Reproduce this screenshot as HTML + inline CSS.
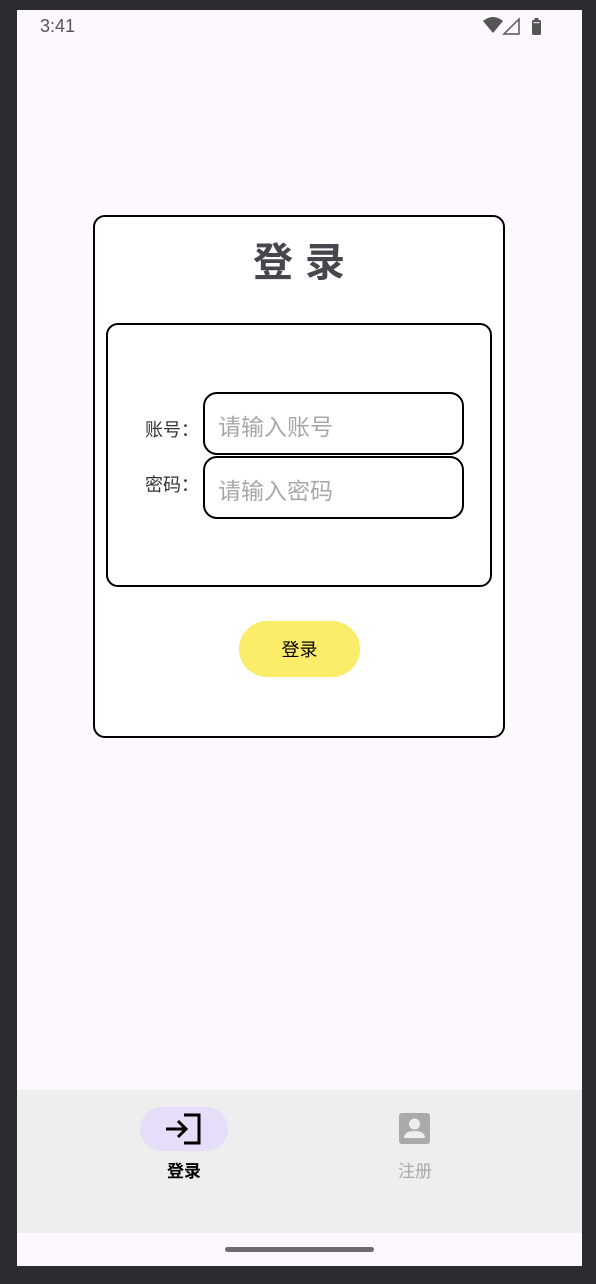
<!DOCTYPE html>
<html><head><meta charset="utf-8">
<style>
*{margin:0;padding:0;box-sizing:border-box}
html,body{width:596px;height:1284px;background:#2b2c30;overflow:hidden;font-family:"Liberation Sans","Noto Sans CJK SC",sans-serif}
.screen{position:absolute;left:17px;top:10px;width:565px;height:1256px;background:#fcf8fe}
.abs{position:absolute}
.card{left:93px;top:215px;width:412px;height:523px;background:#fff;border:2.5px solid #000;border-radius:12px}
.title{left:94px;top:236px;width:410px;text-align:center;font-size:40px;font-weight:bold;color:#48464c;letter-spacing:12px;text-indent:12px;line-height:54px}
.inner{left:106px;top:323px;width:386px;height:264px;border:2.5px solid #000;border-radius:12px;background:#fff}
.inp{left:203px;width:261px;height:63px;border:2.5px solid #000;border-radius:14px;background:#fff;font-size:23px;color:#a8a8a8;padding-left:13px;line-height:66px}
.lbl{left:145px;font-size:18px;color:#333;line-height:24px}
.btn{left:239px;top:621px;width:121px;height:56px;border-radius:28px;background:#fbec6a;text-align:center;line-height:58px;font-size:18px;color:#000}
.nav{left:17px;top:1090px;width:565px;height:143px;background:#eeeeee}
</style></head><body>
<div class="screen"></div>
<div class="abs" style="left:40px;top:15px;font-size:18px;color:#555;line-height:22px">3:41</div>
<svg class="abs" style="left:482px;top:16px" width="66" height="20" viewBox="0 0 66 20">
<path d="M1 5 Q11 -3 21 5 L11 17 Z" fill="#555"/>
<path d="M37 3 L37 18 L22 18 Z" fill="none" stroke="#555" stroke-width="1.5"/>
<rect x="50" y="4" width="9" height="15" rx="1.5" fill="#555"/><rect x="52.5" y="2" width="4" height="3" fill="#555"/>
<rect x="51.5" y="6" width="6" height="1.2" fill="#ddd"/>
</svg>
<div class="abs card"></div>
<div class="abs title">登录</div>
<div class="abs inner"></div>
<div class="abs lbl" style="top:418px">账号：</div>
<div class="abs lbl" style="top:473px">密码：</div>
<div class="abs inp" style="top:392px">请输入账号</div>
<div class="abs inp" style="top:456px">请输入密码</div>
<div class="abs btn">登录</div>
<div class="abs nav"></div>
<div class="abs" style="left:140px;top:1107px;width:88px;height:44px;border-radius:22px;background:#e6def8"></div>
<svg class="abs" style="left:164px;top:1112px" width="40" height="34" viewBox="0 0 40 34">
<path d="M2 17 H22 M14 9 L22 17 L14 25" fill="none" stroke="#000" stroke-width="3"/>
<path d="M20 3 H35 V31 H20" fill="none" stroke="#000" stroke-width="3"/>
</svg>
<div class="abs" style="left:140px;top:1160px;width:88px;text-align:center;font-size:17px;font-weight:bold;color:#000;line-height:24px">登录</div>
<svg class="abs" style="left:399px;top:1113px" width="32" height="32" viewBox="0 0 32 32">
<rect x="0" y="0" width="31" height="31" rx="3" fill="#aaa"/>
<circle cx="15.5" cy="11" r="5.5" fill="#eee"/>
<path d="M5 25 Q5 18 15.5 18 Q26 18 26 25 Z" fill="#eee"/>
</svg>
<div class="abs" style="left:371px;top:1160px;width:88px;text-align:center;font-size:17px;color:#aaa;line-height:24px">注册</div>
<div class="abs" style="left:225px;top:1247px;width:149px;height:5px;border-radius:3px;background:#6c6a70"></div>
</body></html>
